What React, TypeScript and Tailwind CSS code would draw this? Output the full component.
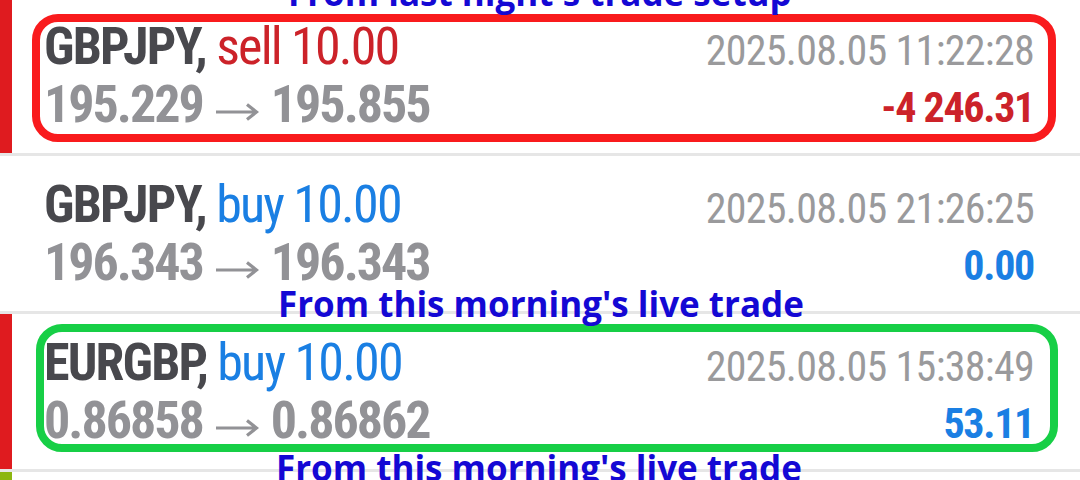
import React from "react";

type Trade = {
  symbol: string;
  side: "buy" | "sell";
  volume: string;
  open: string;
  close: string;
  time: string;
  profit: string;
  bar: string;
};

const trades: Trade[] = [
  {
    symbol: "GBPJPY",
    side: "sell",
    volume: "10.00",
    open: "195.229",
    close: "195.855",
    time: "2025.08.05 11:22:28",
    profit: "-4 246.31",
    bar: "bg-[#df1b1f]",
  },
  {
    symbol: "GBPJPY",
    side: "buy",
    volume: "10.00",
    open: "196.343",
    close: "196.343",
    time: "2025.08.05 21:26:25",
    profit: "0.00",
    bar: "bg-white",
  },
  {
    symbol: "EURGBP",
    side: "buy",
    volume: "10.00",
    open: "0.86858",
    close: "0.86862",
    time: "2025.08.05 15:38:49",
    profit: "53.11",
    bar: "bg-[#df1b1f]",
  },
];

const Arrow = () => (
  <svg width="44" height="20" viewBox="0 0 44 20" className="mx-[12px] inline-block align-[11px]">
    <path d="M1 10H41M32 2.5L41.5 10L32 17.5" fill="none" stroke="#929296" strokeWidth="3.2" />
  </svg>
);

const TradeRow: React.FC<{ t: Trade }> = ({ t }) => {
  const sideColor = t.side === "sell" ? "text-[#cc2229]" : "text-[#1a7fe3]";
  const profitColor = t.profit.startsWith("-") ? "text-[#cc2229]" : "text-[#1a7fe3]";
  return (
    <div className="flex h-[158px] border-b-[3px] border-[#e6e6e6]">
      <div className={`w-[12px] shrink-0 ${t.bar}`} />
      <div className="flex-1 pl-[32px] pr-[46px] pt-[20px] font-['Roboto',sans-serif] font-stretch-condensed">
        <div className="flex items-baseline justify-between leading-[58px]">
          <div className="text-[52px] tracking-[-1.8px]">
            <span className="font-bold text-[#48484d]">{t.symbol},</span>{" "}
            <span className={sideColor}>
              {t.side} {t.volume}
            </span>
          </div>
          <div className="relative top-[1px] text-[42px] tracking-[-0.7px] text-[#9a9a9c]">{t.time}</div>
        </div>
        <div className="flex items-baseline justify-between leading-[52px]">
          <div className="flex items-baseline text-[52px] font-bold tracking-[-2px] text-[#929296]">
            <span>{t.open}</span>
            <Arrow />
            <span>{t.close}</span>
          </div>
          <div className={`text-[42px] font-bold tracking-[-1.3px] ${profitColor}`}>{t.profit}</div>
        </div>
      </div>
    </div>
  );
};

const Note: React.FC<{ text: string; className: string }> = ({ text, className }) => (
  <div
    className={`absolute whitespace-nowrap font-['Open_Sans',sans-serif] text-[35px] font-bold leading-none text-[#1408d4] ${className}`}
  >
    {text}
  </div>
);

export default function App() {
  return (
    <div className="relative h-[480px] w-[1080px] overflow-hidden bg-white">
      <div className="-mt-[2px]">
        {trades.map((t, i) => (
          <TradeRow key={i} t={t} />
        ))}
        <div className="flex h-[40px]">
          <div className="w-[12px] shrink-0 bg-[#8cb60f]" />
        </div>
      </div>

      {/* annotation boxes */}
      <div className="absolute left-[32px] top-[14px] h-[128px] w-[1024px] rounded-[26px] border-[8px] border-[#f91b1d]" />
      <div className="absolute left-[36px] top-[324px] h-[128px] w-[1022px] rounded-[26px] border-[8px] border-[#17cf46]" />

      <Note text="From last night's trade setup" className="left-[288px] top-[-25px]" />
      <Note text="From this morning's live trade" className="left-[278px] top-[286px]" />
      <Note text="From this morning's live trade" className="left-[276px] top-[450px]" />
    </div>
  );
}
